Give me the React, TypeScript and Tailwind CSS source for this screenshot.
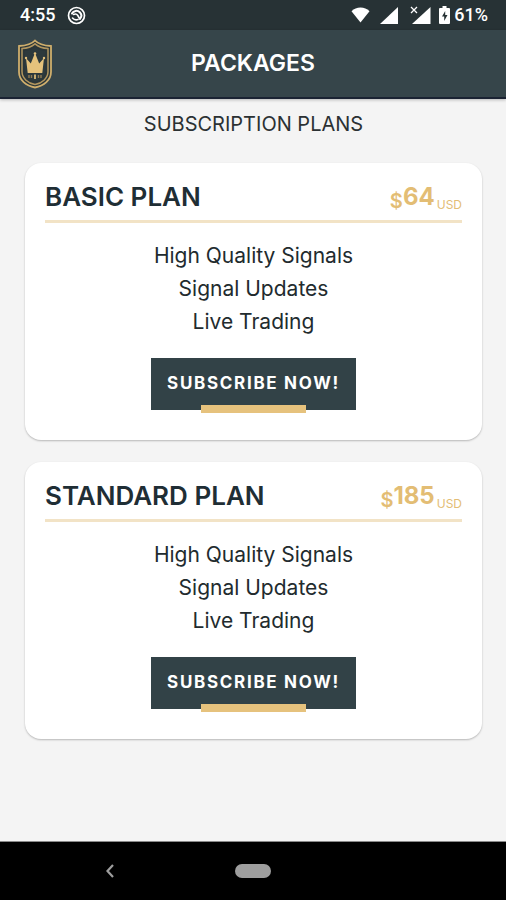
interface IPlan {
  id: number;
  name: string;
  price: string;
  features: string[];
}

const FEATURES = ["High Quality Signals", "Signal Updates", "Live Trading"];

const plans: IPlan[] = [
  { id: 1, name: "BASIC PLAN", price: "64", features: FEATURES },
  { id: 2, name: "STANDARD PLAN", price: "185", features: FEATURES },
];

const StatusBar = () => (
  <div className="flex h-[30px] items-center bg-[#273235] pl-5 pr-[18px] text-white">
    <span className="font-[Roboto,sans-serif] text-lg font-medium">4:55</span>
    <svg className="ml-3 size-[19px]" viewBox="0 0 19 19" fill="none">
      <circle cx="9.5" cy="9.5" r="8" stroke="#fff" strokeWidth="1.7" />
      <path
        d="M5 7.5C6.5 4.5 10.5 4 12.8 6.3c2 2 1.8 4.7.2 6.5"
        stroke="#fff"
        strokeWidth="2"
        strokeLinecap="round"
      />
      <path
        d="M6.5 8.5c2-1 3.5-.3 4.3 1l2 3.5M5.5 12c1.5 1.8 3.5 2.2 5.5 1.5"
        stroke="#fff"
        strokeWidth="1.6"
        strokeLinecap="round"
      />
    </svg>
    <div className="ml-auto flex items-center">
      <svg className="h-4 w-[19px]" viewBox="0 0 19 16" fill="#fff">
        <path d="M9.5 15.5.5 4.2C3 1.8 6 .5 9.5.5s6.5 1.3 9 3.7z" />
      </svg>
      <svg className="ml-2.5 h-[17px] w-[18px]" viewBox="0 0 18 17" fill="#fff">
        <path d="M18 0v17H0z" />
      </svg>
      <svg className="ml-3 h-[19px] w-[21px]" viewBox="0 0 21 19">
        <path d="M20.5 1v17H2z" fill="#fff" />
        <path d="M0 0h9v9H0z" fill="#273235" />
        <path d="m1 1 6 6M7 1 1 7" stroke="#fff" strokeWidth="1.3" />
      </svg>
      <svg className="ml-2 h-[18px] w-[11px]" viewBox="0 0 11 18">
        <path
          d="M3.5 0h4v2H10q1 0 1 1v14q0 1-1 1H1q-1 0-1-1V3q0-1 1-1h2.5z"
          fill="#fff"
        />
        <path d="M6.2 5 3 10.5h2.2V15l3.3-6H6.2z" fill="#273235" />
      </svg>
      <span className="ml-1 font-[Roboto,sans-serif] text-lg font-medium">
        61%
      </span>
    </div>
  </div>
);

const Logo = () => (
  <svg className="h-[50px] w-9" viewBox="0 0 36 50" fill="none">
    <path
      d="M18 1.5c3 3.2 8 5 16 5.5v26c0 8-7 14-16 15.500C9 47 2 41 2 33V7c8-.5 13-2.3 16-5.5z"
      fill="#2b3638"
      stroke="#cfae6c"
      strokeWidth="1.8"
    />
    <path
      d="M18 4.8c3 2.5 7 4.3 13 4.8v23c0 6.5-5.5 11.4-13 13-7.5-1.6-13-6.5-13-13v-23c6-.5 10-2.3 13-4.8z"
      stroke="#b2965f"
      strokeWidth="1.5"
    />
    <path
      d="M18 8.3c3 1.9 6 3.2 10.3 3.7v20c0 5.3-4.3 9.3-10.3 11-6-1.7-10.3-5.7-10.3-11V12c4.3-.5 7.3-1.8 10.3-3.7z"
      fill="#2d393c"
    />
    <path
      d="m9 19 4.8 5.5L18 14l4.2 10.5L27 19l-1.7 15H10.7z"
      fill="#e5c27c"
    />
    <circle cx="9" cy="19" r="1.2" fill="#e5c27c" />
    <circle cx="18" cy="14.5" r="1.3" fill="#e5c27c" />
    <circle cx="27" cy="19" r="1.2" fill="#e5c27c" />
    <path
      d="M12 36v3M14.5 36v3M21.5 36v3M24 36v3"
      stroke="#8f7b53"
      strokeWidth="1.4"
    />
    <path d="M18 35.5v4.5" stroke="#d9b876" strokeWidth="1.8" />
  </svg>
);

const PlanCard = ({ plan }: { plan: IPlan }) => (
  <section className="flex flex-col rounded-2xl bg-white px-5 pt-4 pb-[30px] shadow-[0_1px_2px_rgba(0,0,0,0.25)]">
    <div className="flex h-11 items-start justify-between border-b-3 border-[#f2e3c6]">
      <h2 className="text-[26px] leading-9 font-semibold text-[#1f2e35]">
        {plan.name}
      </h2>
      <p className="flex items-end pt-0.5 text-[#e3bd74]">
        <span className="text-xl leading-6 font-semibold">$</span>
        <span className="text-2xl leading-8 font-bold">{plan.price}</span>
        <span className="ml-0.5 text-xs leading-4">USD</span>
      </p>
    </div>

    <ul className="mt-4 text-center text-[21px] leading-[33px] text-[#222b2e]">
      {plan.features.map((feature) => (
        <li key={feature}>{feature}</li>
      ))}
    </ul>

    <button
      type="button"
      className="relative mt-5 h-[52px] w-[205px] self-center bg-[#324247] text-[17px] font-bold tracking-widest text-white"
    >
      SUBSCRIBE NOW!
      <span className="absolute -bottom-[3px] left-[50px] h-2 w-[105px] bg-[#e6c27d]" />
    </button>
  </section>
);

const App = () => {
  return (
    <div className="flex min-h-screen flex-col bg-[#f4f4f4] font-[Inter,sans-serif]">
      <StatusBar />

      {/* header */}
      <header className="grid h-[69px] grid-cols-[1fr_auto_1fr] items-center border-b-2 border-[#1b2333] bg-[#36454a] px-[17px] shadow-[0_1px_3px_rgba(0,0,0,0.25)]">
        <Logo />
        <h1 className="text-[23px] font-semibold text-white">PACKAGES</h1>
      </header>

      {/* plans */}
      <main className="flex-1 pt-2.5 pr-6 pb-6 pl-[25px]">
        <p className="text-center text-xl leading-[30px] text-[#2b3133]">
          SUBSCRIPTION PLANS
        </p>
        <div className="mt-6 flex flex-col gap-[22px]">
          {plans.map((plan) => (
            <PlanCard key={plan.id} plan={plan} />
          ))}
        </div>
      </main>

      {/* system navigation */}
      <nav className="grid h-[59px] grid-cols-3 items-center border-t border-[#8a8a8a] bg-black">
        <button type="button" aria-label="Back" className="ml-[105px]">
          <svg className="h-3.5 w-2.5" viewBox="0 0 10 14" fill="none">
            <path d="M8 1 2.5 7 8 13" stroke="#9e9e9e" strokeWidth="2.2" />
          </svg>
        </button>
        <button
          type="button"
          aria-label="Home"
          className="h-3.5 w-9 justify-self-center rounded-full bg-[#9e9e9e]"
        />
      </nav>
    </div>
  );
};

export default App;
